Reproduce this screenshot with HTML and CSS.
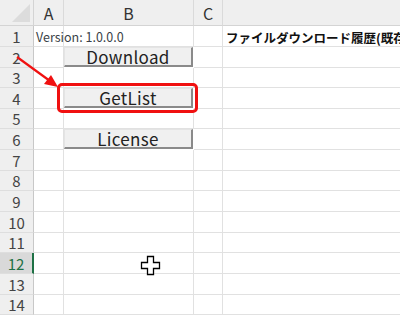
FILE: index.html
```html
<!DOCTYPE html>
<html lang="ja">
<head>
    <meta charset="UTF-8">
    <meta name="viewport" content="width=device-width, initial-scale=1.0">
    <title>Sheet</title>
    <link rel="stylesheet" href="styles.css">
</head>
<body>
    <div class="sheet">
        <div class="grid">
            <!-- cabecera -->
            <div class="corner"><div class="corner-tri"></div></div>
            <div class="col-head">A</div>
            <div class="col-head">B</div>
            <div class="col-head">C</div>
            <div class="col-head last"></div>

            <!-- fila 1 -->
            <div class="row-head">1</div>
            <div class="cell"><span class="version">Version: 1.0.0.0</span></div>
            <div class="cell"></div>
            <div class="cell"></div>
            <div class="cell"><span class="title">ファイルダウンロード履歴(既存データ)</span></div>

            <!-- fila 2 -->
            <div class="row-head">2</div>
            <div class="cell"></div>
            <div class="cell btn-cell"><button class="xl-btn">Download</button></div>
            <div class="cell"></div>
            <div class="cell"></div>

            <div class="row-head">3</div>
            <div class="cell"></div><div class="cell"></div><div class="cell"></div><div class="cell"></div>

            <div class="row-head">4</div>
            <div class="cell"></div>
            <div class="cell btn-cell"><button class="xl-btn">GetList</button></div>
            <div class="cell"></div>
            <div class="cell"></div>

            <div class="row-head">5</div>
            <div class="cell"></div><div class="cell"></div><div class="cell"></div><div class="cell"></div>

            <div class="row-head">6</div>
            <div class="cell"></div>
            <div class="cell btn-cell"><button class="xl-btn">License</button></div>
            <div class="cell"></div>
            <div class="cell"></div>

            <div class="row-head">7</div>
            <div class="cell"></div><div class="cell"></div><div class="cell"></div><div class="cell"></div>
            <div class="row-head">8</div>
            <div class="cell"></div><div class="cell"></div><div class="cell"></div><div class="cell"></div>
            <div class="row-head">9</div>
            <div class="cell"></div><div class="cell"></div><div class="cell"></div><div class="cell"></div>
            <div class="row-head">10</div>
            <div class="cell"></div><div class="cell"></div><div class="cell"></div><div class="cell"></div>
            <div class="row-head">11</div>
            <div class="cell"></div><div class="cell"></div><div class="cell"></div><div class="cell"></div>
            <div class="row-head active">12</div>
            <div class="cell"></div><div class="cell"></div><div class="cell"></div><div class="cell"></div>
            <div class="row-head">13</div>
            <div class="cell"></div><div class="cell"></div><div class="cell"></div><div class="cell"></div>
            <div class="row-head">14</div>
            <div class="cell"></div><div class="cell"></div><div class="cell"></div><div class="cell"></div>
        </div>

        <!-- anotaciones encima de la hoja -->
        <div class="highlight"></div>
        <svg class="arrow" width="70" height="100" viewBox="0 0 70 100">
            <line x1="17" y1="57" x2="50" y2="81" stroke="#f01010" stroke-width="2.2"/>
            <polygon points="58,87 44,84 51,75" fill="#f01010"/>
        </svg>
        <svg class="cursor" width="22" height="22" viewBox="0 0 22 22">
            <path d="M7.5 1.5h6v6h6v6h-6v6h-6v-6h-6v-6h6z" fill="#fff" stroke="#000" stroke-width="1.3"/>
        </svg>
    </div>
</body>
</html>
```

FILE: styles.css
```css
body {
    margin: 0;
    background-color: #ffffff;
    font-family: "Noto Sans CJK JP", "Noto Sans", sans-serif;
    overflow: hidden;
}
.sheet {
    position: relative;
    width: 400px;
    height: 317px;
    overflow: hidden;
}
.grid {
    display: grid;
    grid-template-columns: 34px 30px 130px 29px 200px;
    grid-template-rows: 26px 21px 21px 20px 21px 20px 21px 21px 20px 21px 21px 20px 21px 21px 20px 10px;
}
.corner {
    background-color: #efefef;
    border-right: 1px solid #d4d4d4;
    border-bottom: 1px solid #d4d4d4;
    position: relative;
}
.corner-tri {
    position: absolute;
    right: 3px;
    bottom: 3px;
    width: 0;
    height: 0;
    border-left: 18px solid transparent;
    border-bottom: 18px solid #dcdcdc;
}
.col-head {
    background-color: #efefef;
    border-right: 1px solid #dadada;
    border-bottom: 1px solid #d4d4d4;
    color: #333;
    font-size: 16px;
    display: flex;
    align-items: center;
    justify-content: center;
    box-sizing: border-box;
}
.col-head.last {
    border-right: none;
}
.row-head {
    background-color: #efefef;
    border-right: 1px solid #c8c8c8;
    border-bottom: 1px solid #dedede;
    color: #444;
    font-size: 15px;
    display: flex;
    align-items: center;
    justify-content: center;
    box-sizing: border-box;
    line-height: 1;
}
.row-head.active {
    background-color: #d9d9d9;
    color: #1e7145;
    border-right: 2px solid #1e7145;
}
.cell {
    border-right: 1px solid #e1e1e1;
    border-bottom: 1px solid #e1e1e1;
    box-sizing: border-box;
    white-space: nowrap;
    position: relative;
}
.version {
    position: relative;
    z-index: 1;
    display: block;
    padding-left: 2px;
    padding-top: 1px;
    font-size: 12.5px;
    color: #3a3f47;
}
.title {
    display: block;
    padding-left: 3px;
    padding-top: 2px;
    font-size: 12.5px;
    font-weight: bold;
    color: #111;
}
.btn-cell {
    border-right-color: transparent;
    border-bottom-color: transparent;
}
.xl-btn {
    display: block;
    width: 100%;
    height: 100%;
    margin: 0;
    padding: 0;
    background-color: #f0f0f0;
    border-top: 1px solid #e4e4e4;
    border-left: 1px solid #e4e4e4;
    border-right: 2px solid #8a8a8a;
    border-bottom: 2px solid #8a8a8a;
    font-family: "Noto Sans CJK JP", "Noto Sans", sans-serif;
    font-size: 17px;
    letter-spacing: 0.3px;
    color: #222;
    line-height: 1;
    box-sizing: border-box;
}
.highlight {
    position: absolute;
    left: 57px;
    top: 83px;
    width: 141px;
    height: 30px;
    border: 3px solid #f01010;
    border-radius: 5px;
    box-sizing: border-box;
}
.arrow {
    position: absolute;
    left: 0;
    top: 0;
}
.cursor {
    position: absolute;
    left: 140px;
    top: 255px;
}
```
